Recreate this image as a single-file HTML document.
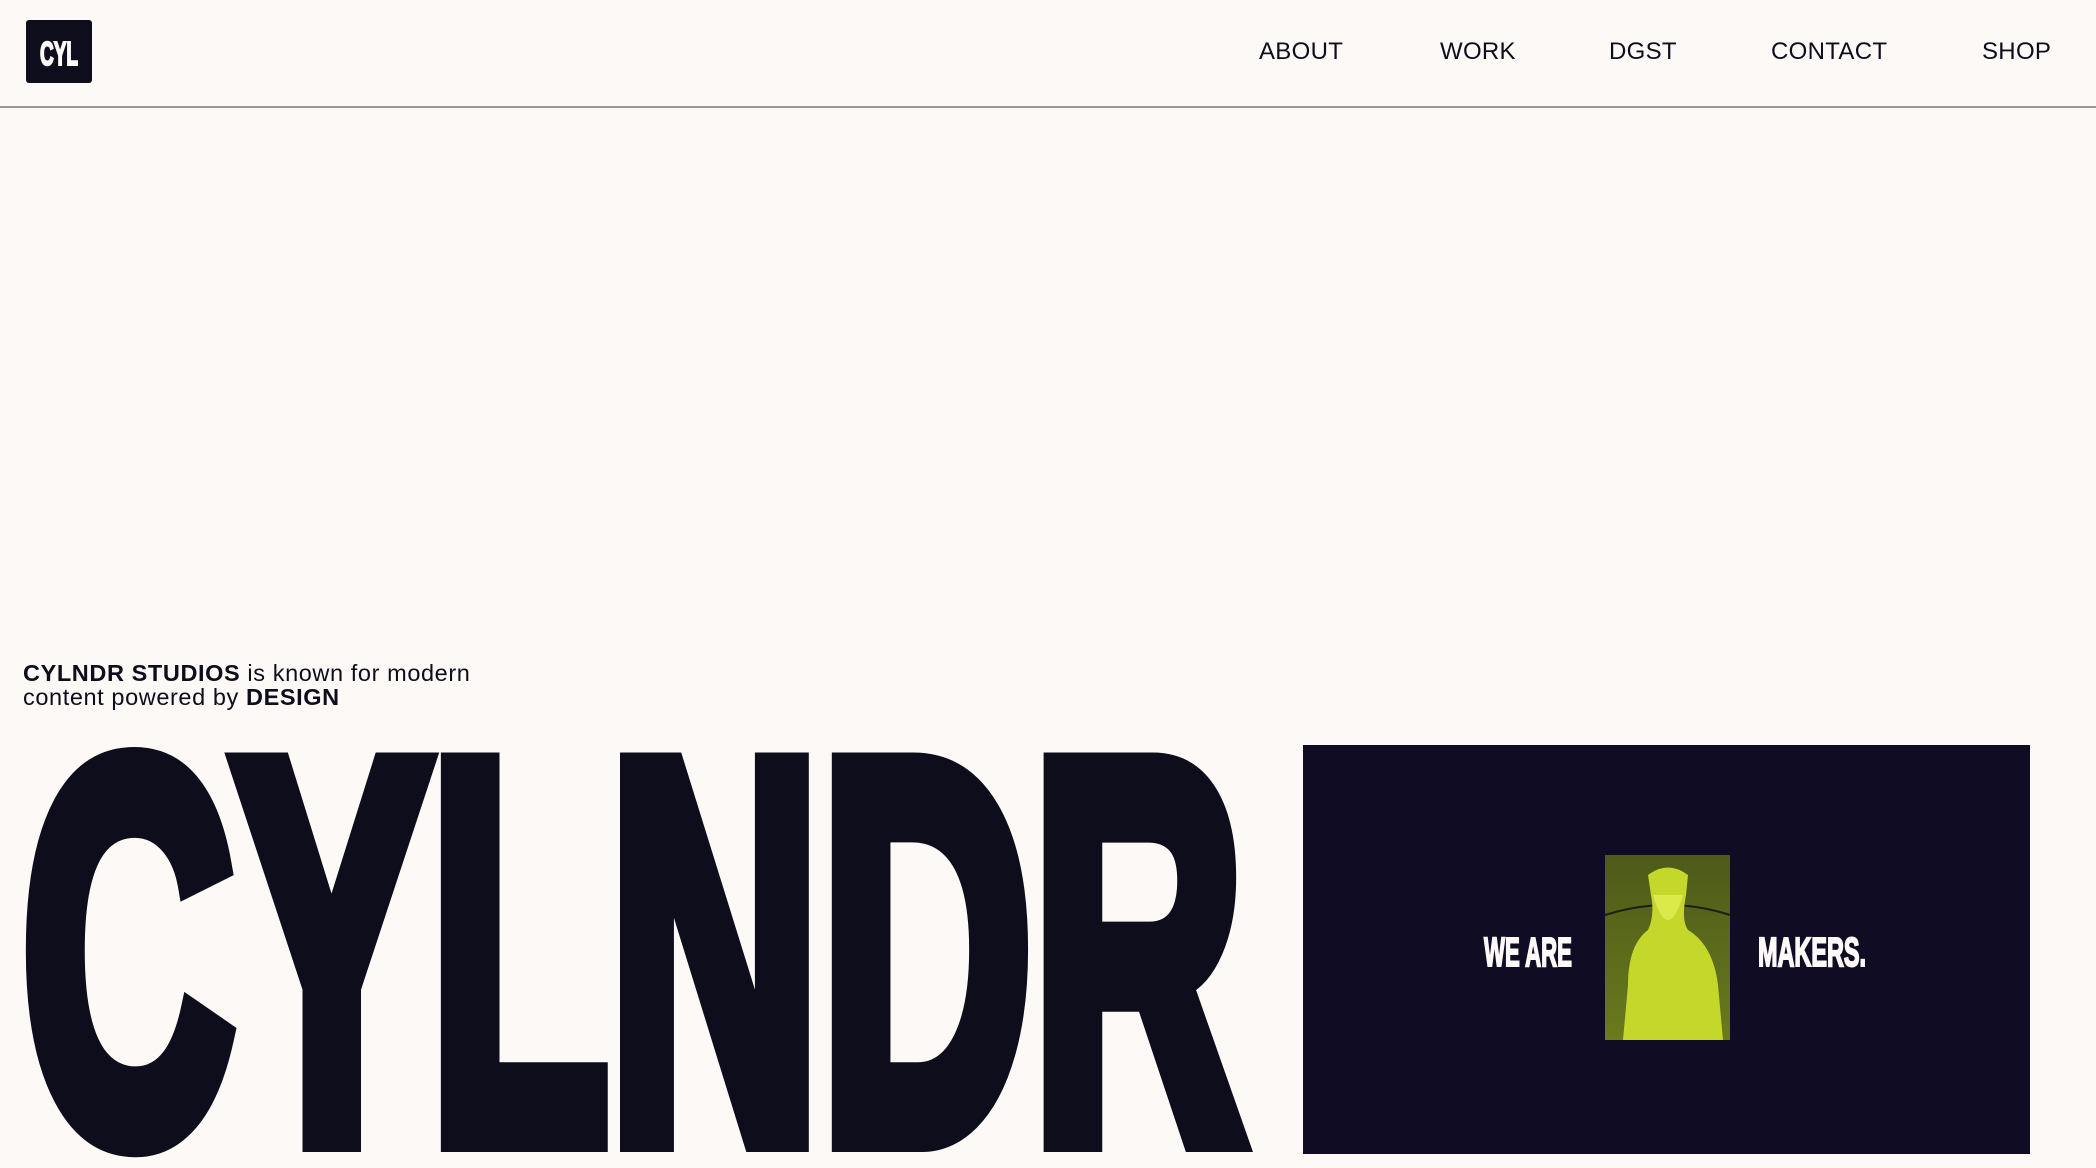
<!DOCTYPE html>
<html style="overflow:hidden;width:2096px;height:1168px"><head><meta charset="utf-8"><style>
*{margin:0;padding:0;box-sizing:border-box}
body{width:2096px;height:1168px;background:#fdf9f6;overflow:hidden;font-family:"Liberation Sans",sans-serif;color:#0e0d1c;position:relative}
.hdr{position:absolute;left:0;top:0;width:2096px;height:108px;border-bottom:2px solid #9a9898}
.logo{position:absolute;left:26px;top:20px;width:66px;height:63px;background:#0e0d1c;border-radius:3px}
.nav a{position:absolute;top:38px;font-size:24px;color:#0e0d1c;text-decoration:none;letter-spacing:0.3px}
.tag{position:absolute;left:23px;top:661px;font-size:23.5px;line-height:24px;color:#0e0d1c;letter-spacing:0.6px}
.box{position:absolute;left:1303px;top:745px;width:727px;height:409px;background:#0f0c24}
</style></head><body>
<div class="hdr">
<div class="logo"><svg width="66" height="63"><text x="33" y="45" text-anchor="middle" font-family="Liberation Sans" font-weight="bold" font-size="33" fill="#fdf9f6" stroke="#fdf9f6" stroke-width="2" textLength="38" lengthAdjust="spacingAndGlyphs">CYL</text></svg></div>
<div class="nav">
<a style="left:1259px">ABOUT</a>
<a style="left:1440px">WORK</a>
<a style="left:1609px">DGST</a>
<a style="left:1771px">CONTACT</a>
<a style="left:1982px">SHOP</a>
</div>
</div>
<div class="tag"><b>CYLNDR STUDIOS</b> is known for modern<br>content powered by <b>DESIGN</b></div>
<svg style="position:absolute;left:0;top:700px" width="1290" height="468">
<text x="22" y="437" font-family="Liberation Sans" font-weight="bold" font-size="537" fill="#0e0d1c" stroke="#0e0d1c" stroke-width="30" stroke-linejoin="miter" textLength="1222" lengthAdjust="spacingAndGlyphs">CYLNDR</text>
</svg>
<div class="box">
<svg width="727" height="409">
<defs><linearGradient id="g" x1="0" y1="0" x2="0" y2="1"><stop offset="0" stop-color="#4d5a1a"/><stop offset="1" stop-color="#6a7a1c"/></linearGradient></defs>
<text x="181" y="221" font-family="Liberation Sans" font-weight="bold" font-size="41" fill="#fdf9f6" stroke="#fdf9f6" stroke-width="2" textLength="88" lengthAdjust="spacingAndGlyphs">WE ARE</text>
<text x="455" y="221" font-family="Liberation Sans" font-weight="bold" font-size="41" fill="#fdf9f6" stroke="#fdf9f6" stroke-width="2" textLength="108" lengthAdjust="spacingAndGlyphs">MAKERS.</text>
<rect x="302" y="110" width="125" height="185" fill="url(#g)"/>
<path d="M302 170 Q365 150 427 170" stroke="#1a1f10" stroke-width="2" fill="none"/>
<path d="M345 130 Q365 115 385 130 L383 150 Q378 175 385 185 Q410 200 415 240 L420 295 L320 295 L325 240 Q325 200 345 185 Q352 170 348 150 Z" fill="#c4d82c"/>
<path d="M350 150 Q365 200 380 150" fill="#dbe94a"/>
</svg>
</div>
</body></html>
